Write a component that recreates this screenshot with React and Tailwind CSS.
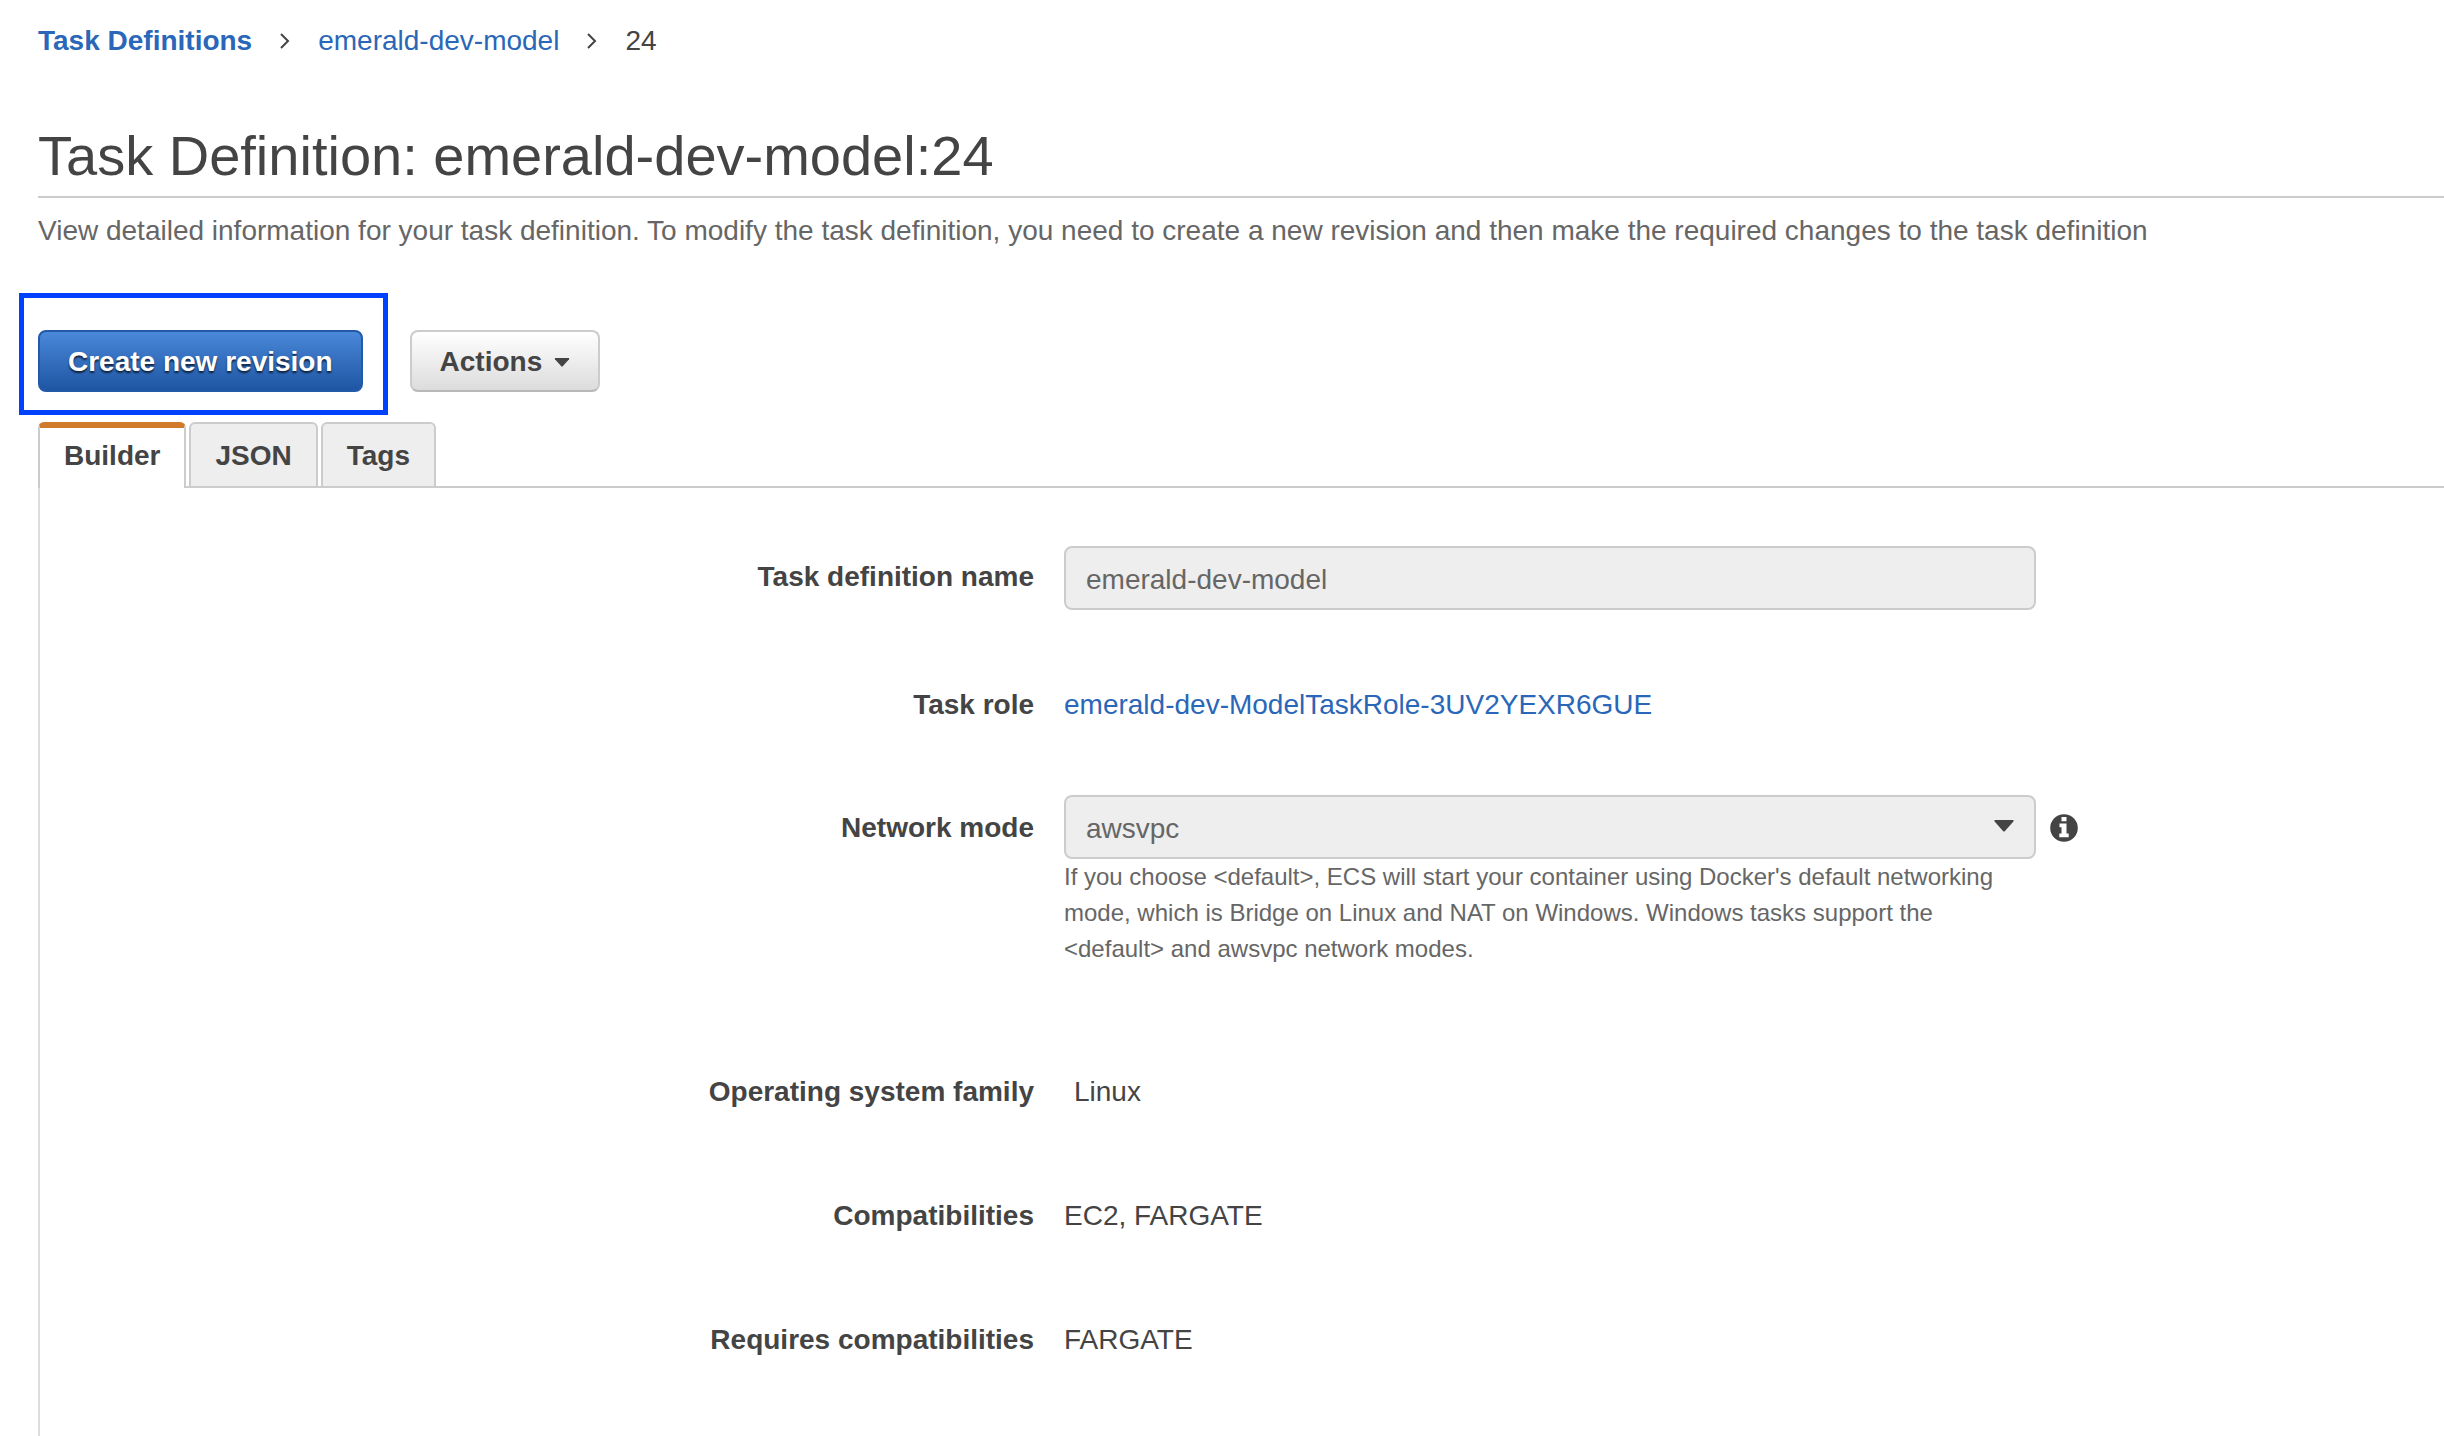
import React from "react";

const Chevron = () => (
  <svg className="h-4 w-3 shrink-0" viewBox="0 0 12 16" fill="none" stroke="#444" strokeWidth="2" aria-hidden="true">
    <path d="M2 1l7 7-7 7" />
  </svg>
);

const Caret = ({ className }) => (
  <svg className={className} viewBox="0 0 20 12" fill="#444" aria-hidden="true">
    <path d="M1 0h18q1.200 .6.4 1.600L11 11q-1 1-2 0L.6 1.600Q-.2.6 1 0z" />
  </svg>
);

const InfoIcon = () => (
  <svg className="size-7" viewBox="0 0 28 28" aria-hidden="true">
    <circle cx="14" cy="14" r="13.800" fill="#444" />
    <path fill="#fff" d="M11.500 3h5v4.200h-5zM9.500 9.500h7v10h2.200v3.800H9.300v-3.800h2.200v-6.200h-2z" />
  </svg>
);

function Row({ label, htmlFor, className = "", labelClass = "", children, aside }) {
  const Label = htmlFor ? "label" : "div";
  return (
    <div className={`grid grid-cols-[994fr_1380fr] gap-x-[30px] ${className}`}>
      <Label htmlFor={htmlFor} className={`block text-right font-bold ${labelClass}`}>
        {label}
      </Label>
      <div className="grid grid-cols-[972fr_394fr] gap-x-[14px]">
        <div className="min-w-0">{children}</div>
        {aside}
      </div>
    </div>
  );
}

function Tab({ children, active }) {
  return (
    <button
      type="button"
      role="tab"
      aria-selected={!!active}
      className={
        active
          ? "relative z-10 -mb-[2px] h-[66px] rounded-t-md border-x-2 border-t-[6px] border-x-[#ccc] border-t-[#d17a2b] bg-white px-6 pt-2 pb-3 leading-10 font-bold"
          : "h-16 rounded-t-md border-x-2 border-t-2 border-[#ccc] bg-[#eee] px-6 pt-3 pb-[10px] leading-10 font-bold"
      }
    >
      {children}
    </button>
  );
}

export default function App() {
  return (
    <div className="flex min-h-screen flex-col overflow-x-hidden bg-white font-['Helvetica_Neue','Liberation_Sans',Arial,sans-serif] text-[28px] leading-10 text-[#444]">
      <div className="pl-[38px]">
        <nav aria-label="Breadcrumb" className="flex items-center gap-[27px] pt-[21px]">
          <a href="#definitions" className="font-bold text-[#2a67b8]">Task Definitions</a>
          <Chevron />
          <a href="#model" className="text-[#2a67b8]">emerald-dev-model</a>
          <Chevron />
          <span>24</span>
        </nav>
        <h1 className="mt-[63px] border-b-2 border-[#ccc] pb-2 text-[56px] leading-[64px]">
          Task Definition: emerald-dev-model:24
        </h1>
        <p className="mt-[13px] text-[#666]">
          View detailed information for your task definition. To modify the task definition, you need to create a new
          revision and then make the required changes to the task definition
        </p>
      </div>

      <div className="mt-[42px] flex items-start gap-[22px] pl-[19px]">
        <div className="border-[5px] border-[#0040ff] pt-8 pr-5 pb-[18px] pl-[14px]">
          <button
            type="button"
            className="block h-[62px] rounded-lg border-2 border-[#2259a8] bg-linear-to-b from-[#4a88d9] to-[#1e56a3] px-7 pt-[2px] font-bold text-white [text-shadow:0_2px_2px_rgba(0,0,0,0.7)]"
          >
            Create new revision
          </button>
        </div>
        <button
          type="button"
          className="mt-[37px] flex h-[62px] items-center gap-3 rounded-lg border-2 border-[#ccc] border-b-[#b8b8b8] bg-linear-to-b from-white to-[#dcdcdc] px-7 pt-[2px] font-bold"
        >
          Actions
          <Caret className="h-[9px] w-4" />
        </button>
      </div>

      <div className="mt-[7px] flex flex-1 flex-col pl-[38px]">
        <div role="tablist" className="flex gap-[3px]">
          <Tab active>Builder</Tab>
          <Tab>JSON</Tab>
          <Tab>Tags</Tab>
        </div>
        <div role="tabpanel" className="flex-1 border-t-2 border-l-2 border-t-[#ccc] border-l-[#ddd] pt-[58px]">
          <Row label="Task definition name" htmlFor="name" labelClass="pt-[11px]">
            <input
              id="name"
              readOnly
              value="emerald-dev-model"
              className="block h-16 w-full rounded-lg border-2 border-[#ccc] bg-[#eee] px-5 pt-1 text-[#666] outline-none"
            />
          </Row>
          <Row label="Task role" className="mt-[75px]">
            <a href="#role" className="text-[#2a67b8]">emerald-dev-ModelTaskRole-3UV2YEXR6GUE</a>
          </Row>
          <Row
            label="Network mode"
            htmlFor="mode"
            className="mt-[70px]"
            labelClass="pt-[13px]"
            aside={
              <button type="button" aria-label="Network mode info" className="mt-[19px] size-7">
                <InfoIcon />
              </button>
            }
          >
            <div className="relative">
              <select
                id="mode"
                defaultValue="awsvpc"
                className="block h-16 w-full appearance-none rounded-lg border-2 border-[#ccc] bg-[#eee] px-5 pt-1 text-[#666] outline-none"
              >
                <option>awsvpc</option>
              </select>
              <Caret className="pointer-events-none absolute top-[25px] right-[22px] h-3 w-5" />
            </div>
            <p className="text-2xl leading-9 text-[#666]">
              If you choose &lt;default&gt;, ECS will start your container using Docker's default networking mode, which
              is Bridge on Linux and NAT on Windows. Windows tasks support the &lt;default&gt; and awsvpc network modes.
            </p>
          </Row>
          <Row label="Operating system family" className="mt-[105px]">
            <span className="pl-[10px]">Linux</span>
          </Row>
          <Row label="Compatibilities" className="mt-[84px]">EC2, FARGATE</Row>
          <Row label="Requires compatibilities" className="mt-[84px]">FARGATE</Row>
        </div>
      </div>
    </div>
  );
}
